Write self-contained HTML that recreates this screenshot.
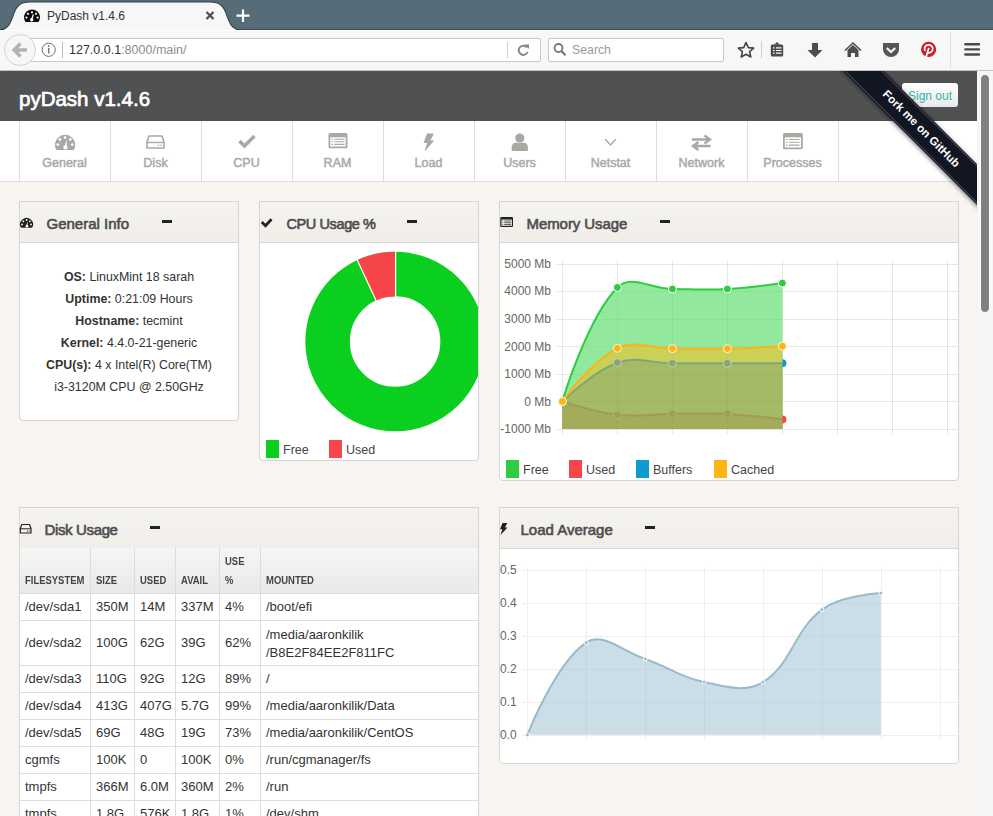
<!DOCTYPE html>
<html><head><meta charset="utf-8">
<style>
html,body{margin:0;padding:0;}
body{width:993px;height:816px;overflow:hidden;position:relative;background:#f8f5f0;font-family:"Liberation Sans",sans-serif;}
.a{position:absolute;}
.t{position:absolute;white-space:nowrap;line-height:1;}
.wbox{position:absolute;border:1px solid #d5d5d5;border-radius:0 0 4px 4px;background:#fff;box-sizing:border-box;overflow:hidden;}
.whead{position:absolute;left:0;right:0;top:0;height:40px;border-bottom:1px solid #d5d5d5;background:linear-gradient(#f5f3ef,#f1eeea);}
.wt{position:absolute;font-size:15px;color:#4d4d4d;-webkit-text-stroke:0.6px #4d4d4d;white-space:nowrap;line-height:1;}
.minus{position:absolute;width:10px;height:3px;background:#222;}
.navt{position:absolute;top:121px;height:60px;width:91px;border-left:1px solid #ddd;box-sizing:border-box;}
.navl{position:absolute;left:0;right:0;top:157px;text-align:center;font-size:12.3px;font-weight:bold;color:#aaa6a1;line-height:1;}
.tbl{position:absolute;}
.cell{position:absolute;font-size:13px;color:#333;white-space:nowrap;line-height:1;}
.th{position:absolute;font-size:11px;font-weight:bold;color:#444;white-space:nowrap;line-height:1;transform:scaleX(0.86);transform-origin:0 0;}
.leg{position:absolute;font-size:12.5px;color:#444;white-space:nowrap;line-height:1;}
</style></head><body>

<!-- ================= BROWSER CHROME ================= -->
<div class="a" style="left:0;top:0;width:993px;height:30px;background:#566c78;"></div>
<div class="a" style="left:0;top:29px;width:993px;height:1px;background:#3b4c57;"></div>
<svg class="a" style="left:0;top:0" width="260" height="31" viewBox="0 0 260 31">
  <path d="M-2 30.5 C8 30 10 24 13 16 C16 6 20 2 30 2 L210 2 C220 2 224 6 227 16 C230 24 232 30 242 30.5 Z" fill="#f7f7f7"/>
  <path d="M-2 30 C8 30 10 24 13 16 C16 6 20 2 30 2 L210 2 C220 2 224 6 227 16 C230 24 232 30 242 30" fill="none" stroke="#33434d" stroke-width="1.1"/>
  <path d="M-2 31 H260" stroke="#f7f7f7" stroke-width="1"/>
    <!-- gauge icon -->
  <path d="M25.4 22 A8 8 0 1 1 38.6 22 Z" fill="#0c0c0c"/>
  <circle cx="32" cy="12.3" r="1.1" fill="#fff"/><circle cx="28" cy="13.8" r="1.1" fill="#fff"/><circle cx="36" cy="13.8" r="1.1" fill="#fff"/>
  <circle cx="26.4" cy="17.6" r="1.1" fill="#fff"/><circle cx="37.6" cy="17.6" r="1.1" fill="#fff"/>
  <path d="M33.3 14.5 L31.8 19" stroke="#fff" stroke-width="1.3"/><circle cx="31.7" cy="19.8" r="1.7" fill="#fff"/>
  <!-- close x -->
  <path d="M206.5 12 L213.5 19 M213.5 12 L206.5 19" stroke="#4d4d4d" stroke-width="2.2"/>
  <!-- plus -->
  <path d="M243 9.5 V22 M236.5 15.7 H249.5" stroke="#fff" stroke-width="2.2"/>
</svg>
<div class="t" style="left:47px;top:10px;font-size:12px;color:#333;">PyDash v1.4.6</div>

<!-- toolbar -->
<div class="a" style="left:0;top:30px;width:993px;height:40px;background:#f7f7f7;border-bottom:1px solid #c4c4c4;border-top:0;"></div>
<div class="a" style="left:0;top:30px;width:993px;height:1px;background:#fff;"></div>
<div class="a" style="left:20px;top:38px;width:519px;height:22px;background:#fff;border:1px solid #c8c8c8;border-radius:0 2px 2px 0;"></div>
<div class="a" style="left:4px;top:34px;width:30px;height:30px;border-radius:50%;background:#f7f7f7;border:1px solid #d3d3d3;"></div>
<svg class="a" style="left:0;top:30px" width="993" height="40" viewBox="0 30 993 40">
  <!-- back arrow -->
  <path d="M20.5 43.5 L14 50 L20.5 56.5 M15 50 H27" stroke="#b3b3b3" stroke-width="3.4" fill="none" stroke-linejoin="miter"/>
  <!-- info -->
  <circle cx="48.7" cy="49.8" r="6.6" stroke="#6e6e6e" stroke-width="1" fill="none"/>
  <path d="M48.7 48 V53.5" stroke="#777" stroke-width="1.5"/><circle cx="48.7" cy="46" r="0.9" fill="#777"/>
  <path d="M62.5 42 V58" stroke="#bdbdbd" stroke-width="1"/>
  <path d="M507.5 42 V58" stroke="#d0d0d0" stroke-width="1"/>
  <!-- reload -->
  <path d="M527 47.5 A4.6 4.6 0 1 0 527.6 52" stroke="#888" stroke-width="2" fill="none"/>
  <path d="M524.5 44.5 L529 44.5 L529 49 Z" fill="#888"/>
  <!-- star -->
  <path d="M746 42.5 L748.3 47.6 L753.7 48.1 L749.6 51.7 L750.8 57 L746 54.2 L741.2 57 L742.4 51.7 L738.3 48.1 L743.7 47.6 Z" stroke="#444" stroke-width="1.6" fill="none" stroke-linejoin="round"/>
  <path d="M761.5 41 V58" stroke="#cfcfcf" stroke-width="1"/>
  <!-- reading list / clipboard -->
  <rect x="770.8" y="44.5" width="12.4" height="12" rx="1.5" fill="#4d4d4d"/>
  <path d="M774 44.8 L777 42 L780 44.8 Z" fill="#4d4d4d"/>
  <path d="M773 47.8 H774.6 M776 47.8 H781.5 M773 50.5 H774.6 M776 50.5 H781.5 M773 53.2 H774.6 M776 53.2 H781.5" stroke="#f7f7f7" stroke-width="1.2"/>
  <!-- download -->
  <path d="M812 43 H818 V50 H822.5 L815 57.5 L807.5 50 H812 Z" fill="#4d4d4d"/>
  <!-- home -->
  <path d="M845 50.5 L853 43 L861 50.5" stroke="#4d4d4d" stroke-width="1.6" fill="none"/>
  <path d="M847.5 50 L853 45 L858.5 50 V57 H855 V53 H851 V57 H847.5 Z" fill="#4d4d4d"/>
  <!-- pocket -->
  <path d="M883 43 H899 V49.5 A8 7.5 0 0 1 883 49.5 Z" fill="#555"/>
  <path d="M886.8 48 L891 52 L895.2 48" stroke="#f7f7f7" stroke-width="2.2" fill="none"/>
  <!-- pinterest -->
  <circle cx="928.6" cy="49.4" r="7.6" fill="#cb2027"/>
  <path d="M928.6 48.6 L926 57.3 M927.4 52.6 C930.6 53.6 933.1 51.2 932.7 48.3 C932.4 45.5 929.9 44.6 927.9 44.9 C925.2 45.3 923.9 47.6 924.9 50.3" stroke="#fff" stroke-width="1.7" fill="none" stroke-linecap="round"/>
  <path d="M950.5 32 V68" stroke="#dcdcdc" stroke-width="1"/>
  <!-- hamburger -->
  <path d="M965.3 44.3 H979 M965.3 49.4 H979 M965.3 54.5 H979" stroke="#4a4a4a" stroke-width="2.4" stroke-linecap="round"/>
  <!-- magnifier -->
  <circle cx="558.5" cy="48" r="4" stroke="#777" stroke-width="1.8" fill="none"/>
  <path d="M561.3 51 L565.5 55.2" stroke="#777" stroke-width="2.2"/>
</svg>
<div class="t" style="left:69px;top:44px;font-size:12.5px;color:#333;">127.0.0.1<span style="color:#8c8c8c">:8000/main/</span></div>
<div class="a" style="left:548px;top:38px;width:174px;height:22px;background:#fff;border:1px solid #c8c8c8;border-radius:2px;"></div>
<svg class="a" style="left:548px;top:38px" width="30" height="24" viewBox="548 38 30 24">
  <circle cx="558.5" cy="48" r="4" stroke="#777" stroke-width="1.8" fill="none"/>
  <path d="M561.3 51 L565.5 55.2" stroke="#777" stroke-width="2.2"/>
</svg>
<div class="t" style="left:572px;top:44px;font-size:12.3px;color:#999;">Search</div>

<!-- ================= PAGE ================= -->
<div class="a" style="left:0;top:71px;width:977px;height:50px;background:#505153;"></div>
<div class="t" style="left:19px;top:88.5px;font-size:20.5px;color:#fff;-webkit-text-stroke:0.7px #fff;">pyDash v1.4.6</div>
<div class="a" style="left:902px;top:83px;width:56px;height:24px;border-radius:3px;background:linear-gradient(#fff,#e9e9e9);"></div>
<div class="t" style="left:908px;top:90.2px;font-size:12px;color:#33b5ad;">Sign out</div>

<!-- nav -->
<div class="a" style="left:0;top:121px;width:977px;height:60px;background:#fff;border-bottom:1px solid #ddd;"></div>
<div class="navt" style="left:19px"></div>
<div class="navt" style="left:110px"></div>
<div class="navt" style="left:201px"></div>
<div class="navt" style="left:292px"></div>
<div class="navt" style="left:383px"></div>
<div class="navt" style="left:474px"></div>
<div class="navt" style="left:565px"></div>
<div class="navt" style="left:656px"></div>
<div class="navt" style="left:747px;width:92px;border-right:1px solid #ddd;"></div>
<div class="a" style="left:19px;top:0;width:820px;height:0"></div>
<div class="t" style="left:19px;top:157px;width:91px;text-align:center;font-size:12.5px;color:#aba7a3;-webkit-text-stroke:0.45px #aba7a3;">General</div>
<div class="t" style="left:110px;top:157px;width:91px;text-align:center;font-size:12.5px;color:#aba7a3;-webkit-text-stroke:0.45px #aba7a3;">Disk</div>
<div class="t" style="left:201px;top:157px;width:91px;text-align:center;font-size:12.5px;color:#aba7a3;-webkit-text-stroke:0.45px #aba7a3;">CPU</div>
<div class="t" style="left:292px;top:157px;width:91px;text-align:center;font-size:12.5px;color:#aba7a3;-webkit-text-stroke:0.45px #aba7a3;">RAM</div>
<div class="t" style="left:383px;top:157px;width:91px;text-align:center;font-size:12.5px;color:#aba7a3;-webkit-text-stroke:0.45px #aba7a3;">Load</div>
<div class="t" style="left:474px;top:157px;width:91px;text-align:center;font-size:12.5px;color:#aba7a3;-webkit-text-stroke:0.45px #aba7a3;">Users</div>
<div class="t" style="left:565px;top:157px;width:91px;text-align:center;font-size:12.5px;color:#aba7a3;-webkit-text-stroke:0.45px #aba7a3;">Netstat</div>
<div class="t" style="left:656px;top:157px;width:91px;text-align:center;font-size:12.5px;color:#aba7a3;-webkit-text-stroke:0.45px #aba7a3;">Network</div>
<div class="t" style="left:747px;top:157px;width:91px;text-align:center;font-size:12.5px;color:#aba7a3;-webkit-text-stroke:0.45px #aba7a3;">Processes</div>
<svg class="a" style="left:0;top:121px" width="977" height="60" viewBox="0 121 977 60">
  <g fill="#aba7a3">
  <!-- General gauge -->
  <path d="M56.4 150 A10.1 10.1 0 1 1 73.8 150 Z"/>
  </g>
  <g fill="#fff">
  <circle cx="65.1" cy="137.6" r="1.4"/><circle cx="59.9" cy="139.5" r="1.4"/><circle cx="70.3" cy="139.5" r="1.4"/>
  <circle cx="57.9" cy="144.6" r="1.4"/><circle cx="72.3" cy="144.6" r="1.4"/>
  <path d="M66.8 139.6 L64.4 146.5 L66.6 146.9 Z"/><circle cx="65.4" cy="147.4" r="2.1"/>
  </g>
  <!-- Disk hdd -->
  <path d="M149 136 H162 L164 142 V148 H147 V142 Z" fill="none" stroke="#aba7a3" stroke-width="1.6" stroke-linejoin="round"/>
  <path d="M147.5 142.5 H163.5" stroke="#aba7a3" stroke-width="1.4"/>
  <circle cx="158.5" cy="145.3" r="0.8" fill="#aba7a3"/><circle cx="161" cy="145.3" r="0.8" fill="#aba7a3"/>
  <!-- CPU check -->
  <path d="M239.5 141 L244.5 146 L254.5 136" stroke="#aba7a3" stroke-width="3.6" fill="none"/>
  <!-- RAM list-alt -->
  <rect x="328.5" y="133" width="19" height="15.2" rx="1.5" fill="#aba7a3"/>
  <rect x="330.3" y="137.3" width="15.4" height="9.2" fill="#fff"/>
  <path d="M331.5 139.2 H333 M334.3 139.2 H344.5 M331.5 141.8 H333 M334.3 141.8 H344.5 M331.5 144.4 H333 M334.3 144.4 H344.5" stroke="#aba7a3" stroke-width="1.1"/>
  <!-- Load bolt -->
  <path d="M427 133.5 L433.8 133.5 L430.5 140.5 L434.3 140.5 L424.5 151.5 L427.2 143 L423.5 143 Z" fill="#aba7a3"/>
  <!-- Users -->
  <circle cx="519.8" cy="138" r="4.6" fill="#aba7a3"/>
  <path d="M511.7 151 V147.5 C511.7 144 514 142.8 516 142.8 L523.6 142.8 C525.6 142.8 527.9 144 527.9 147.5 V151 Z" fill="#aba7a3"/>
  <!-- Netstat chevron -->
  <path d="M605.3 139.3 L610.5 145 L615.8 139.3" stroke="#aba7a3" stroke-width="1.5" fill="none"/>
  <!-- Network exchange -->
  <path d="M692 139.5 H708.5 M704.5 135.5 L710 139.5 L704.5 143.5" stroke="#aba7a3" stroke-width="2.4" fill="none"/>
  <path d="M710.5 146 H694.5 M698.5 142 L693 146 L698.5 150" stroke="#aba7a3" stroke-width="2.4" fill="none"/>
  <!-- Processes list-alt -->
  <rect x="783" y="133" width="19.8" height="16.2" rx="1.5" fill="#aba7a3"/>
  <rect x="784.8" y="137.3" width="16.2" height="10.2" fill="#fff"/>
  <path d="M786 139.5 H787.6 M789 139.5 H799.5 M786 142.3 H787.6 M789 142.3 H799.5 M786 145.1 H787.6 M789 145.1 H799.5" stroke="#aba7a3" stroke-width="1.1"/>
</svg>

<!-- ================= WIDGETS ================= -->
<!-- General Info -->
<div class="wbox" style="left:19px;top:201px;width:220px;height:220px;"><div class="whead"></div></div>
<svg class="a" style="left:19px;top:215px" width="20" height="16" viewBox="19 215 20 16">
  <path d="M21.05 227.8 A6.45 6.45 0 1 1 32.05 227.8 Z" fill="#222"/>
  <g fill="#fff"><circle cx="26.55" cy="220" r="0.9"/><circle cx="23.3" cy="221.3" r="0.9"/><circle cx="29.8" cy="221.3" r="0.9"/><circle cx="22.1" cy="224.4" r="0.9"/><circle cx="31" cy="224.4" r="0.9"/>
  <path d="M27.6 221.4 L26.2 225.8 L27.6 226 Z"/><circle cx="26.9" cy="226.3" r="1.3"/></g>
</svg>
<div class="wt" style="left:46.5px;top:216.4px;">General Info</div>
<div class="minus" style="left:162px;top:220px;"></div>
<div class="a" style="left:19px;top:266px;width:220px;text-align:center;font-size:12.4px;color:#333;line-height:22px;">
<b>OS:</b> LinuxMint 18 sarah<br><b>Uptime:</b> 0:21:09 Hours<br><b>Hostname:</b> tecmint<br><b>Kernel:</b> 4.4.0-21-generic<br><b>CPU(s):</b> 4 x Intel(R) Core(TM)<br>i3-3120M CPU @ 2.50GHz
</div>

<!-- CPU Usage -->
<div class="wbox" style="left:259px;top:201px;width:220px;height:260px;"><div class="whead"></div></div>
<svg class="a" style="left:259px;top:215px" width="20" height="16" viewBox="259 215 20 16">
  <path d="M261.8 222 L265.5 225.7 L271.5 219.3" stroke="#222" stroke-width="2.8" fill="none"/>
</svg>
<div class="wt" style="left:286.5px;top:216.8px;font-size:14.5px;letter-spacing:-0.4px;">CPU Usage %</div>
<div class="minus" style="left:407px;top:220px;"></div>
<svg class="a" style="left:260px;top:243px" width="218" height="217" viewBox="260 243 218 217">
  <circle cx="395.1" cy="341.5" r="67.5" fill="none" stroke="#0bcf1f" stroke-width="44.5"/>
  <path d="M395.1 251.8 A89.7 89.7 0 0 0 357.2 260.2 L376 300.7 A45 45 0 0 1 395.1 296.5 Z" fill="#f7464a"/>
  <path d="M395.6 251 V297" stroke="#fff" stroke-width="1.2"/>
  <path d="M357 259.5 L376.3 301" stroke="#fff" stroke-width="1.2"/>
</svg>
<div class="a" style="left:266px;top:440px;width:13px;height:18px;background:#0bcf1f;"></div>
<div class="leg" style="left:283px;top:443.8px;">Free</div>
<div class="a" style="left:329px;top:440px;width:13px;height:18px;background:#f7464a;"></div>
<div class="leg" style="left:346px;top:443.8px;">Used</div>

<!-- Memory Usage -->
<div class="wbox" style="left:499px;top:201px;width:460px;height:280px;"><div class="whead"></div></div>
<svg class="a" style="left:499px;top:215px" width="20" height="16" viewBox="499 215 20 16">
  <rect x="500.3" y="217" width="12.7" height="10" rx="1" fill="#222"/>
  <rect x="501.5" y="219.6" width="10.3" height="6.2" fill="#fff"/>
  <path d="M502.3 221 H503.3 M504.2 221 H511 M502.3 222.8 H503.3 M504.2 222.8 H511 M502.3 224.6 H503.3 M504.2 224.6 H511" stroke="#222" stroke-width="0.8"/>
</svg>
<div class="wt" style="left:526.5px;top:216.4px;letter-spacing:-0.07px;">Memory Usage</div>
<div class="minus" style="left:660px;top:220px;"></div>
<svg width="459" height="236" viewBox="499 243 459 236" style="position:absolute;left:499px;top:243px"><path d="M557 264.5H958 M557 291.5H958 M557 319.5H958 M557 346.5H958 M557 374.5H958 M557 401.5H958 M557 429.5H958 M562.5 260.5V434 M617.5 260.5V434 M672.5 260.5V434 M727.5 260.5V434 M782.5 260.5V434 M837.5 260.5V434 M892.5 260.5V434 M947.5 260.5V434" stroke="#efefef" stroke-width="1" fill="none"/><text x="551" y="267.8" text-anchor="end" font-family='"Liberation Sans", sans-serif' font-size="12" fill="#666">5000 Mb</text><text x="551" y="295.4" text-anchor="end" font-family='"Liberation Sans", sans-serif' font-size="12" fill="#666">4000 Mb</text><text x="551" y="323.0" text-anchor="end" font-family='"Liberation Sans", sans-serif' font-size="12" fill="#666">3000 Mb</text><text x="551" y="350.6" text-anchor="end" font-family='"Liberation Sans", sans-serif' font-size="12" fill="#666">2000 Mb</text><text x="551" y="378.1" text-anchor="end" font-family='"Liberation Sans", sans-serif' font-size="12" fill="#666">1000 Mb</text><text x="551" y="405.7" text-anchor="end" font-family='"Liberation Sans", sans-serif' font-size="12" fill="#666">0 Mb</text><text x="551" y="433.3" text-anchor="end" font-family='"Liberation Sans", sans-serif' font-size="12" fill="#666">-1000 Mb</text><path d="M562.40 401.40 C562.40 401.40 586.74 318.84 617.40 287.51 C630.74 273.88 650.40 288.70 672.40 289.00 C694.40 289.29 705.46 290.17 727.40 289.00 C749.46 287.81 782.40 283.10 782.40 283.10 L782.40 428.97 L562.40 428.97 Z" fill="#92e89c"/><path d="M562.40 401.40 C562.40 401.40 586.74 318.84 617.40 287.51 C630.74 273.88 650.40 288.70 672.40 289.00 C694.40 289.29 705.46 290.17 727.40 289.00 C749.46 287.81 782.40 283.10 782.40 283.10" stroke="#2ecc40" stroke-width="2" fill="none"/><path d="M562.40 401.40 C562.40 401.40 591.81 360.58 617.40 348.30 C635.81 339.46 650.40 348.54 672.40 348.60 C694.40 348.66 705.41 349.08 727.40 348.60 C749.41 348.12 782.40 346.20 782.40 346.20 L782.40 428.97 L562.40 428.97 Z" fill="#cbd056"/><path d="M562.40 401.40 C562.40 401.40 593.20 371.08 617.40 362.69 C637.20 355.84 650.40 363.18 672.40 363.30 C694.40 363.42 705.40 363.30 727.40 363.30 C749.40 363.30 782.40 363.30 782.40 363.30 L782.40 428.97 L562.40 428.97 Z" fill="#a4ba64"/><path d="M562.40 401.40 C562.40 401.40 595.08 412.27 617.40 414.80 C639.08 417.26 650.40 414.07 672.40 413.89 C694.40 413.71 705.46 412.77 727.40 413.89 C749.46 415.01 782.40 419.49 782.40 419.49 L782.40 428.97 L562.40 428.97 Z" fill="#a2ac5b"/><path d="M557 264.5H958 M557 291.5H958 M557 319.5H958 M557 346.5H958 M557 374.5H958 M557 401.5H958 M557 429.5H958 M562.5 260.5V434 M617.5 260.5V434 M672.5 260.5V434 M727.5 260.5V434 M782.5 260.5V434 M837.5 260.5V434 M892.5 260.5V434 M947.5 260.5V434" stroke="rgba(0,0,0,0.03)" stroke-width="1" fill="none"/><path d="M562.40 401.40 C562.40 401.40 595.08 412.27 617.40 414.80 C639.08 417.26 650.40 414.07 672.40 413.89 C694.40 413.71 705.46 412.77 727.40 413.89 C749.46 415.01 782.40 419.49 782.40 419.49" stroke="#a09c50" stroke-width="2" fill="none"/><path d="M562.40 401.40 C562.40 401.40 593.20 371.08 617.40 362.69 C637.20 355.84 650.40 363.18 672.40 363.30 C694.40 363.42 705.40 363.30 727.40 363.30 C749.40 363.30 782.40 363.30 782.40 363.30" stroke="#7da77a" stroke-width="2" fill="none"/><path d="M562.40 401.40 C562.40 401.40 591.81 360.58 617.40 348.30 C635.81 339.46 650.40 348.54 672.40 348.60 C694.40 348.66 705.41 349.08 727.40 348.60 C749.41 348.12 782.40 346.20 782.40 346.20" stroke="#fbb316" stroke-width="2" fill="none"/><circle cx="562.40" cy="401.40" r="4" fill="#2ecc40" stroke="#fff" stroke-width="1"/><circle cx="617.40" cy="287.51" r="4" fill="#2ecc40" stroke="#fff" stroke-width="1"/><circle cx="672.40" cy="289.00" r="4" fill="#2ecc40" stroke="#fff" stroke-width="1"/><circle cx="727.40" cy="289.00" r="4" fill="#2ecc40" stroke="#fff" stroke-width="1"/><circle cx="782.40" cy="283.10" r="4" fill="#2ecc40" stroke="#fff" stroke-width="1"/><circle cx="617.40" cy="414.80" r="4" fill="#9da050" stroke="#b5b462" stroke-width="1"/><circle cx="672.40" cy="413.89" r="4" fill="#9da050" stroke="#b5b462" stroke-width="1"/><circle cx="727.40" cy="413.89" r="4" fill="#9da050" stroke="#b5b462" stroke-width="1"/><circle cx="617.40" cy="362.69" r="4" fill="#86a877" stroke="#c9d49a" stroke-width="1"/><circle cx="672.40" cy="363.30" r="4" fill="#86a877" stroke="#c9d49a" stroke-width="1"/><circle cx="727.40" cy="363.30" r="4" fill="#86a877" stroke="#c9d49a" stroke-width="1"/><path d="M782.40 415.49 a4 4 0 0 1 0 8z" fill="#f7464a"/><path d="M782.40 359.30 a4 4 0 0 1 0 8z" fill="#0f9bce"/><circle cx="562.40" cy="401.40" r="4" fill="#fdb515" stroke="#fff6dd" stroke-width="1"/><circle cx="617.40" cy="348.30" r="4" fill="#fdb515" stroke="#fff6dd" stroke-width="1"/><circle cx="672.40" cy="348.60" r="4" fill="#fdb515" stroke="#fff6dd" stroke-width="1"/><circle cx="727.40" cy="348.60" r="4" fill="#fdb515" stroke="#fff6dd" stroke-width="1"/><circle cx="782.40" cy="346.20" r="4" fill="#fdb515" stroke="#fff6dd" stroke-width="1"/></svg>
<div class="a" style="left:506px;top:460px;width:13px;height:18px;background:#2ecc40;"></div>
<div class="leg" style="left:523px;top:463.8px;">Free</div>
<div class="a" style="left:569px;top:460px;width:13px;height:18px;background:#f7464a;"></div>
<div class="leg" style="left:586px;top:463.8px;">Used</div>
<div class="a" style="left:636px;top:460px;width:13px;height:18px;background:#0f9bce;"></div>
<div class="leg" style="left:653px;top:463.8px;">Buffers</div>
<div class="a" style="left:714px;top:460px;width:13px;height:18px;background:#fdb515;"></div>
<div class="leg" style="left:731px;top:463.8px;">Cached</div>

<!-- Disk Usage -->
<div class="wbox" style="left:19px;top:507px;width:460px;height:340px;border-radius:0;"><div class="whead"></div></div>
<svg class="a" style="left:19px;top:520px" width="16" height="16" viewBox="19 520 16 16">
  <path d="M21.8 524.5 H29.5 L31 528.5 V533 H20.3 V528.5 Z" fill="none" stroke="#222" stroke-width="1.2" stroke-linejoin="round"/>
  <path d="M20.5 528.8 H30.8" stroke="#222" stroke-width="1"/>
  <circle cx="27.5" cy="531" r="0.6" fill="#222"/><circle cx="29.2" cy="531" r="0.6" fill="#222"/>
</svg>
<div class="wt" style="left:44.5px;top:522.4px;letter-spacing:-0.36px;">Disk Usage</div>
<div class="minus" style="left:150px;top:526px;"></div>
<div class="a" style="left:20px;top:548px;width:458px;height:45px;background:linear-gradient(#f6f6f6,#e9e9e9);"></div><svg class="a" style="left:0;top:0" width="993" height="816"><path d="M19 593.5H478 M19 620.5H478 M19 665.5H478 M19 692.5H478 M19 719.5H478 M19 746.5H478 M19 773.5H478 M19 800.5H478 M19 827.5H478 M90.5 548V816 M134.5 548V816 M175.5 548V816 M219.5 548V816 M260.5 548V816" stroke="#dddddd" stroke-width="1" fill="none"/></svg><div class="th" style="left:25px;top:574.9px;">FILESYSTEM</div><div class="th" style="left:96px;top:574.9px;">SIZE</div><div class="th" style="left:140px;top:574.9px;">USED</div><div class="th" style="left:181px;top:574.9px;">AVAIL</div><div class="th" style="left:225px;top:574.9px;">%</div><div class="th" style="left:266px;top:574.9px;">MOUNTED</div><div class="th" style="left:225px;top:556.3px;">USE</div><div class="cell" style="left:25px;top:600.3px;">/dev/sda1</div><div class="cell" style="left:96px;top:600.3px;">350M</div><div class="cell" style="left:140px;top:600.3px;">14M</div><div class="cell" style="left:181px;top:600.3px;">337M</div><div class="cell" style="left:225px;top:600.3px;">4%</div><div class="cell" style="left:266px;top:600.3px;">/boot/efi</div><div class="cell" style="left:25px;top:636.3px;">/dev/sda2</div><div class="cell" style="left:96px;top:636.3px;">100G</div><div class="cell" style="left:140px;top:636.3px;">62G</div><div class="cell" style="left:181px;top:636.3px;">39G</div><div class="cell" style="left:225px;top:636.3px;">62%</div><div class="cell" style="left:266px;top:628.0px;">/media/aaronkilik</div><div class="cell" style="left:266px;top:645.5px;">/B8E2F84EE2F811FC</div><div class="cell" style="left:25px;top:672.3px;">/dev/sda3</div><div class="cell" style="left:96px;top:672.3px;">110G</div><div class="cell" style="left:140px;top:672.3px;">92G</div><div class="cell" style="left:181px;top:672.3px;">12G</div><div class="cell" style="left:225px;top:672.3px;">89%</div><div class="cell" style="left:266px;top:672.3px;">/</div><div class="cell" style="left:25px;top:699.3px;">/dev/sda4</div><div class="cell" style="left:96px;top:699.3px;">413G</div><div class="cell" style="left:140px;top:699.3px;">407G</div><div class="cell" style="left:181px;top:699.3px;">5.7G</div><div class="cell" style="left:225px;top:699.3px;">99%</div><div class="cell" style="left:266px;top:699.3px;">/media/aaronkilik/Data</div><div class="cell" style="left:25px;top:726.3px;">/dev/sda5</div><div class="cell" style="left:96px;top:726.3px;">69G</div><div class="cell" style="left:140px;top:726.3px;">48G</div><div class="cell" style="left:181px;top:726.3px;">19G</div><div class="cell" style="left:225px;top:726.3px;">73%</div><div class="cell" style="left:266px;top:726.3px;">/media/aaronkilik/CentOS</div><div class="cell" style="left:25px;top:753.3px;">cgmfs</div><div class="cell" style="left:96px;top:753.3px;">100K</div><div class="cell" style="left:140px;top:753.3px;">0</div><div class="cell" style="left:181px;top:753.3px;">100K</div><div class="cell" style="left:225px;top:753.3px;">0%</div><div class="cell" style="left:266px;top:753.3px;">/run/cgmanager/fs</div><div class="cell" style="left:25px;top:780.3px;">tmpfs</div><div class="cell" style="left:96px;top:780.3px;">366M</div><div class="cell" style="left:140px;top:780.3px;">6.0M</div><div class="cell" style="left:181px;top:780.3px;">360M</div><div class="cell" style="left:225px;top:780.3px;">2%</div><div class="cell" style="left:266px;top:780.3px;">/run</div><div class="cell" style="left:25px;top:807.3px;">tmpfs</div><div class="cell" style="left:96px;top:807.3px;">1.8G</div><div class="cell" style="left:140px;top:807.3px;">576K</div><div class="cell" style="left:181px;top:807.3px;">1.8G</div><div class="cell" style="left:225px;top:807.3px;">1%</div><div class="cell" style="left:266px;top:807.3px;">/dev/shm</div>

<!-- Load Average -->
<div class="wbox" style="left:499px;top:507px;width:460px;height:257px;"><div class="whead"></div></div>
<svg class="a" style="left:499px;top:520px" width="12" height="16" viewBox="499 520 12 16">
  <path d="M502.5 523 L507.3 523 L505 527.5 L507.5 527.5 L500.5 535 L502.3 529.3 L500 529.3 Z" fill="#222"/>
</svg>
<div class="wt" style="left:520.5px;top:522.4px;">Load Average</div>
<div class="minus" style="left:645px;top:526px;"></div>
<svg width="459" height="214" viewBox="499 549 459 214" style="position:absolute;left:499px;top:549px"><path d="M522 570.5H958 M522 603.5H958 M522 636.5H958 M522 669.5H958 M522 702.5H958 M522 735.5H958 M527.5 566.5V740 M586.5 566.5V740 M645.5 566.5V740 M704.5 566.5V740 M763.5 566.5V740 M822.5 566.5V740 M881.5 566.5V740 M940.5 566.5V740" stroke="#efefef" stroke-width="1" fill="none"/><text x="500" y="574.3" font-family='"Liberation Sans", sans-serif' font-size="12" fill="#666">0.5</text><text x="500" y="607.3" font-family='"Liberation Sans", sans-serif' font-size="12" fill="#666">0.4</text><text x="500" y="640.2" font-family='"Liberation Sans", sans-serif' font-size="12" fill="#666">0.3</text><text x="500" y="673.2" font-family='"Liberation Sans", sans-serif' font-size="12" fill="#666">0.2</text><text x="500" y="706.1" font-family='"Liberation Sans", sans-serif' font-size="12" fill="#666">0.1</text><text x="500" y="739.1" font-family='"Liberation Sans", sans-serif' font-size="12" fill="#666">0.0</text><path d="M527.40 734.80 C527.40 734.80 556.07 661.99 586.30 642.54 C603.19 631.67 622.04 651.24 645.20 659.01 C669.16 667.06 679.70 677.30 704.10 682.08 C726.82 686.53 744.78 693.29 763.00 682.08 C791.90 664.30 793.43 631.09 821.90 609.59 C840.55 595.51 880.80 593.12 880.80 593.12 L880.80 734.80 L527.40 734.80 Z" fill="rgba(151,187,205,0.5)"/><path d="M527.40 734.80 C527.40 734.80 556.07 661.99 586.30 642.54 C603.19 631.67 622.04 651.24 645.20 659.01 C669.16 667.06 679.70 677.30 704.10 682.08 C726.82 686.53 744.78 693.29 763.00 682.08 C791.90 664.30 793.43 631.09 821.90 609.59 C840.55 595.51 880.80 593.12 880.80 593.12" stroke="rgba(151,187,205,1)" stroke-width="2" fill="none"/><circle cx="527.40" cy="734.80" r="2" fill="rgba(151,187,205,1)" stroke="#fff" stroke-width="1"/><circle cx="586.30" cy="642.54" r="2" fill="rgba(151,187,205,1)" stroke="#fff" stroke-width="1"/><circle cx="645.20" cy="659.01" r="2" fill="rgba(151,187,205,1)" stroke="#fff" stroke-width="1"/><circle cx="704.10" cy="682.08" r="2" fill="rgba(151,187,205,1)" stroke="#fff" stroke-width="1"/><circle cx="763.00" cy="682.08" r="2" fill="rgba(151,187,205,1)" stroke="#fff" stroke-width="1"/><circle cx="821.90" cy="609.59" r="2" fill="rgba(151,187,205,1)" stroke="#fff" stroke-width="1"/><circle cx="880.80" cy="593.12" r="2" fill="rgba(151,187,205,1)" stroke="#fff" stroke-width="1"/></svg>

<!-- ================= RIBBON ================= -->
<svg class="a" style="left:0;top:71px" width="977" height="745" viewBox="0 71 977 745"><defs><filter id="rsh" x="-20%" y="-20%" width="140%" height="140%"><feGaussianBlur stdDeviation="2.2"/></filter></defs><polygon points="863.80,51.00 823.20,51.00 997.00,224.80 997.00,184.20" fill="rgba(0,0,0,0.55)" filter="url(#rsh)" transform="translate(0,1.5)"/><polygon points="863.80,51.00 823.20,51.00 997.00,224.80 997.00,184.20" fill="#121621"/><line x1="881.70" y1="71" x2="977" y2="166.30" stroke="rgba(255,255,255,0.3)" stroke-width="1"/><line x1="845.30" y1="71" x2="977" y2="202.70" stroke="rgba(255,255,255,0.3)" stroke-width="1"/><text x="921.5" y="128.5" transform="rotate(45 921.5 128.5)" text-anchor="middle" font-family='"Liberation Sans", sans-serif' font-size="11.5" font-weight="bold" fill="#fff" dy="4">Fork me on GitHub</text></svg>

<!-- scrollbar -->
<div class="a" style="left:977px;top:71px;width:16px;height:745px;background:#f6f6f6;"></div>
<div class="a" style="left:980px;top:74px;width:8px;height:237px;border-radius:5px;background:#808080;border:1px solid #fff;"></div>

</body></html>
